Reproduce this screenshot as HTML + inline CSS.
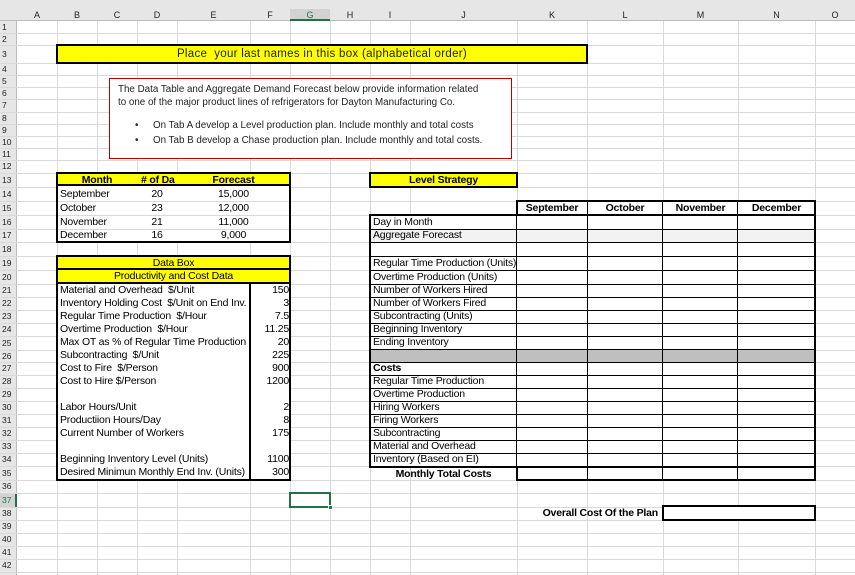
<!DOCTYPE html>
<html><head><meta charset="utf-8">
<style>
*{margin:0;padding:0;box-sizing:border-box}
body{width:855px;height:575px;overflow:hidden;background:#fff;position:relative;font-family:"Liberation Sans",sans-serif;color:#000}
.a{position:absolute}
.h{position:absolute;left:0;width:855px;height:1px;background:#d9d9d9}
.v{position:absolute;top:21px;width:1px;height:554px;background:#d9d9d9}
.ch{position:absolute;top:9px;height:12px;font-size:9px;line-height:12px;text-align:center;color:#222}
.rh{position:absolute;left:0;width:17px;font-size:8.5px;color:#222;padding-left:2px}
.t{position:absolute;font-size:10.5px;line-height:13px;white-space:nowrap;letter-spacing:-0.2px}
.b{font-weight:bold}
.y{background:#ffff00}
</style></head><body>
<div class="a" style="left:0;top:0;width:855px;height:21px;background:#e6e6e6;border-bottom:1px solid #bcbcbc"></div>
<div class="a" style="left:0;top:21px;width:17px;height:554px;background:#e6e6e6;border-right:1px solid #bcbcbc"></div>
<div class="a" style="left:290px;top:9px;width:40px;height:12px;background:#d2d2d2;border-bottom:2px solid #217346"></div>
<div class="a" style="left:0;top:493px;width:17px;height:14px;background:#d2d2d2;border-right:2px solid #217346"></div>

<div class="v" style="left:57px"></div><div class="v" style="left:97px"></div><div class="v" style="left:137px"></div><div class="v" style="left:177px"></div><div class="v" style="left:250px"></div><div class="v" style="left:290px"></div><div class="v" style="left:330px"></div><div class="v" style="left:370px"></div><div class="v" style="left:410px"></div><div class="v" style="left:517px"></div><div class="v" style="left:587px"></div><div class="v" style="left:663px"></div><div class="v" style="left:738px"></div><div class="v" style="left:815px"></div>
<div class="h" style="top:33px"></div><div class="h" style="top:45px"></div><div class="h" style="top:63px"></div><div class="h" style="top:75px"></div><div class="h" style="top:87px"></div><div class="h" style="top:99px"></div><div class="h" style="top:112px"></div><div class="h" style="top:124px"></div><div class="h" style="top:136px"></div><div class="h" style="top:148px"></div><div class="h" style="top:160px"></div><div class="h" style="top:173px"></div><div class="h" style="top:187px"></div><div class="h" style="top:201px"></div><div class="h" style="top:215px"></div><div class="h" style="top:229px"></div><div class="h" style="top:242px"></div><div class="h" style="top:256px"></div><div class="h" style="top:270px"></div><div class="h" style="top:284px"></div><div class="h" style="top:297px"></div><div class="h" style="top:310px"></div><div class="h" style="top:323px"></div><div class="h" style="top:336px"></div><div class="h" style="top:350px"></div><div class="h" style="top:362px"></div><div class="h" style="top:375px"></div><div class="h" style="top:388px"></div><div class="h" style="top:401px"></div><div class="h" style="top:414px"></div><div class="h" style="top:427px"></div><div class="h" style="top:440px"></div><div class="h" style="top:453px"></div><div class="h" style="top:466px"></div><div class="h" style="top:480px"></div><div class="h" style="top:493px"></div><div class="h" style="top:507px"></div><div class="h" style="top:520px"></div><div class="h" style="top:533px"></div><div class="h" style="top:546px"></div><div class="h" style="top:559px"></div><div class="h" style="top:572px"></div>

<div class="ch" style="left:17px;width:40px">A</div><div class="ch" style="left:57px;width:40px">B</div><div class="ch" style="left:97px;width:40px">C</div><div class="ch" style="left:137px;width:40px">D</div><div class="ch" style="left:177px;width:73px">E</div><div class="ch" style="left:250px;width:40px">F</div><div class="ch" style="left:290px;width:40px;color:#217346">G</div><div class="ch" style="left:330px;width:40px">H</div><div class="ch" style="left:370px;width:40px">I</div><div class="ch" style="left:410px;width:107px">J</div><div class="ch" style="left:517px;width:70px">K</div><div class="ch" style="left:587px;width:76px">L</div><div class="ch" style="left:663px;width:75px">M</div><div class="ch" style="left:738px;width:77px">N</div><div class="ch" style="left:815px;width:40px">O</div>

<div class="rh" style="top:21px;line-height:12px">1</div><div class="rh" style="top:33px;line-height:12px">2</div><div class="rh" style="top:45px;line-height:18px">3</div><div class="rh" style="top:63px;line-height:12px">4</div><div class="rh" style="top:75px;line-height:12px">5</div><div class="rh" style="top:87px;line-height:12px">6</div><div class="rh" style="top:99px;line-height:13px">7</div><div class="rh" style="top:112px;line-height:12px">8</div><div class="rh" style="top:124px;line-height:12px">9</div><div class="rh" style="top:136px;line-height:12px">10</div><div class="rh" style="top:148px;line-height:12px">11</div><div class="rh" style="top:160px;line-height:13px">12</div><div class="rh" style="top:173px;line-height:14px">13</div><div class="rh" style="top:187px;line-height:14px">14</div><div class="rh" style="top:201px;line-height:14px">15</div><div class="rh" style="top:215px;line-height:14px">16</div><div class="rh" style="top:229px;line-height:13px">17</div><div class="rh" style="top:242px;line-height:14px">18</div><div class="rh" style="top:256px;line-height:14px">19</div><div class="rh" style="top:270px;line-height:14px">20</div><div class="rh" style="top:284px;line-height:13px">21</div><div class="rh" style="top:297px;line-height:13px">22</div><div class="rh" style="top:310px;line-height:13px">23</div><div class="rh" style="top:323px;line-height:13px">24</div><div class="rh" style="top:336px;line-height:14px">25</div><div class="rh" style="top:350px;line-height:12px">26</div><div class="rh" style="top:362px;line-height:13px">27</div><div class="rh" style="top:375px;line-height:13px">28</div><div class="rh" style="top:388px;line-height:13px">29</div><div class="rh" style="top:401px;line-height:13px">30</div><div class="rh" style="top:414px;line-height:13px">31</div><div class="rh" style="top:427px;line-height:13px">32</div><div class="rh" style="top:440px;line-height:13px">33</div><div class="rh" style="top:453px;line-height:13px">34</div><div class="rh" style="top:466px;line-height:14px">35</div><div class="rh" style="top:480px;line-height:13px">36</div><div class="rh" style="top:493px;line-height:14px;color:#217346">37</div><div class="rh" style="top:507px;line-height:13px">38</div><div class="rh" style="top:520px;line-height:13px">39</div><div class="rh" style="top:533px;line-height:13px">40</div><div class="rh" style="top:546px;line-height:13px">41</div><div class="rh" style="top:559px;line-height:13px">42</div>

<div class="a y" style="left:56px;top:44px;width:532px;height:20px;border:2px solid #000;font-size:11.5px;line-height:16px;text-align:center;color:#222;letter-spacing:0.3px">Place&nbsp; your last names in this box (alphabetical order)</div>

<div class="a" style="left:109px;top:78px;width:403px;height:81px;border:1px solid #c00000;background:#fff;font-size:9.8px;color:#222">
 <div class="a" style="left:8px;top:4px;line-height:13px;white-space:nowrap">The Data Table and Aggregate Demand Forecast below provide information related<br>to one of the major product lines of refrigerators for Dayton Manufacturing Co.</div>
 <div class="a" style="left:25px;top:39px;line-height:15px;white-space:nowrap">•</div>
 <div class="a" style="left:25px;top:54px;line-height:15px;white-space:nowrap">•</div>
 <div class="a" style="left:43px;top:39px;line-height:15px;white-space:nowrap">On Tab A develop a Level production plan. Include monthly and total costs<br>On Tab B develop a Chase production plan. Include monthly and total costs.</div>
</div>

<div class="a" style="left:56px;top:172px;width:235px;height:71px;border:2px solid #000;background:#fff"></div>
<div class="a y" style="left:58px;top:174px;width:231px;height:12px;border-bottom:2px solid #000"></div>
<div class="a" style="left:58px;top:201px;width:231px;height:1px;background:#d9d9d9"></div>
<div class="a" style="left:58px;top:215px;width:231px;height:1px;background:#d9d9d9"></div>
<div class="a" style="left:58px;top:229px;width:231px;height:1px;background:#d9d9d9"></div>
<div class="t b" style="left:57px;top:174px;width:80px;text-align:center">Month</div>
<div class="t b" style="left:137px;top:174px;width:40px;overflow:hidden;text-align:left;padding-left:4px">#&nbsp;of Da</div>
<div class="t b" style="left:177px;top:174px;width:113px;text-align:center">Forecast</div>
<div class="t" style="left:60px;top:188px">September</div><div class="t" style="left:137px;top:188px;width:40px;text-align:center">20</div><div class="t" style="left:177px;top:188px;width:113px;text-align:center">15,000</div>
<div class="t" style="left:60px;top:202px">October</div><div class="t" style="left:137px;top:202px;width:40px;text-align:center">23</div><div class="t" style="left:177px;top:202px;width:113px;text-align:center">12,000</div>
<div class="t" style="left:60px;top:216px">November</div><div class="t" style="left:137px;top:216px;width:40px;text-align:center">21</div><div class="t" style="left:177px;top:216px;width:113px;text-align:center">11,000</div>
<div class="t" style="left:60px;top:229px">December</div><div class="t" style="left:137px;top:229px;width:40px;text-align:center">16</div><div class="t" style="left:177px;top:229px;width:113px;text-align:center">9,000</div>

<div class="a" style="left:56px;top:255px;width:235px;height:226px;border:2px solid #000;background:#fff"></div>
<div class="a y" style="left:58px;top:257px;width:231px;height:13px;border-bottom:2px solid #000"></div>
<div class="a y" style="left:58px;top:270px;width:231px;height:14px;border-bottom:2px solid #000"></div>
<div class="a" style="left:249px;top:284px;width:2px;height:196px;background:#000"></div>
<div class="t" style="left:57px;top:257px;width:233px;text-align:center">Data Box</div>
<div class="t" style="left:57px;top:270px;width:233px;text-align:center">Productivity and Cost Data</div>
<div class="t" style="left:60px;top:284px">Material and Overhead&nbsp; $/Unit</div><div class="t" style="left:251px;top:284px;width:38px;text-align:right">150</div>
<div class="t" style="left:60px;top:297px">Inventory Holding Cost&nbsp; $/Unit on End Inv.</div><div class="t" style="left:251px;top:297px;width:38px;text-align:right">3</div>
<div class="t" style="left:60px;top:310px">Regular Time Production&nbsp; $/Hour</div><div class="t" style="left:251px;top:310px;width:38px;text-align:right">7.5</div>
<div class="t" style="left:60px;top:323px">Overtime Production&nbsp; $/Hour</div><div class="t" style="left:251px;top:323px;width:38px;text-align:right">11.25</div>
<div class="t" style="left:60px;top:336px">Max OT as % of Regular Time Production</div><div class="t" style="left:251px;top:336px;width:38px;text-align:right">20</div>
<div class="t" style="left:60px;top:349px">Subcontracting&nbsp; $/Unit</div><div class="t" style="left:251px;top:349px;width:38px;text-align:right">225</div>
<div class="t" style="left:60px;top:362px">Cost to Fire&nbsp; $/Person</div><div class="t" style="left:251px;top:362px;width:38px;text-align:right">900</div>
<div class="t" style="left:60px;top:375px">Cost to Hire $/Person</div><div class="t" style="left:251px;top:375px;width:38px;text-align:right">1200</div>
<div class="t" style="left:60px;top:401px">Labor Hours/Unit</div><div class="t" style="left:251px;top:401px;width:38px;text-align:right">2</div>
<div class="t" style="left:60px;top:414px">Productiion Hours/Day</div><div class="t" style="left:251px;top:414px;width:38px;text-align:right">8</div>
<div class="t" style="left:60px;top:427px">Current Number of Workers</div><div class="t" style="left:251px;top:427px;width:38px;text-align:right">175</div>
<div class="t" style="left:60px;top:453px">Beginning Inventory Level (Units)</div><div class="t" style="left:251px;top:453px;width:38px;text-align:right">1100</div>
<div class="t" style="left:60px;top:466px">Desired Minimun Monthly End Inv. (Units)</div><div class="t" style="left:251px;top:466px;width:38px;text-align:right">300</div>

<div class="a" style="left:289px;top:492px;width:42px;height:16px;border:2px solid #217346"></div>
<div class="a" style="left:328px;top:505px;width:5px;height:5px;background:#217346;border:1px solid #fff"></div>

<div class="a y" style="left:369px;top:172px;width:149px;height:16px;border:2px solid #000"></div>
<div class="t b" style="left:369px;top:174px;width:149px;text-align:center">Level Strategy</div>

<div class="a" style="left:370px;top:215px;width:445px;height:252px;background:#fff"></div>
<div class="a" style="left:370px;top:229px;width:445px;height:13px;background:#f2f2f2"></div>
<div class="a" style="left:370px;top:350px;width:445px;height:12px;background:#bfbfbf"></div>
<div class="a" style="left:516px;top:200px;width:300px;height:16px;border:2px solid #000;background:#fff"></div>
<div class="a" style="left:369px;top:214px;width:447px;height:254px;border:2px solid #000"></div>
<div class="a" style="left:516px;top:214px;width:1px;height:254px;background:#000"></div>
<div class="a" style="left:587px;top:201px;width:1px;height:280px;background:#000"></div>
<div class="a" style="left:662px;top:201px;width:1px;height:280px;background:#000"></div>
<div class="a" style="left:737px;top:201px;width:1px;height:280px;background:#000"></div>
<div class="a" style="left:370px;top:229px;width:445px;height:1px;background:#000"></div>
<div class="a" style="left:370px;top:242px;width:445px;height:1px;background:#000"></div>
<div class="a" style="left:370px;top:256px;width:445px;height:1px;background:#000"></div>
<div class="a" style="left:370px;top:270px;width:445px;height:1px;background:#000"></div>
<div class="a" style="left:370px;top:284px;width:445px;height:1px;background:#000"></div>
<div class="a" style="left:370px;top:297px;width:445px;height:1px;background:#000"></div>
<div class="a" style="left:370px;top:310px;width:445px;height:1px;background:#000"></div>
<div class="a" style="left:370px;top:323px;width:445px;height:1px;background:#000"></div>
<div class="a" style="left:370px;top:336px;width:445px;height:1px;background:#000"></div>
<div class="a" style="left:370px;top:349px;width:445px;height:1px;background:#000"></div>
<div class="a" style="left:370px;top:362px;width:445px;height:1px;background:#000"></div>
<div class="a" style="left:370px;top:375px;width:445px;height:1px;background:#000"></div>
<div class="a" style="left:370px;top:388px;width:445px;height:1px;background:#000"></div>
<div class="a" style="left:370px;top:401px;width:445px;height:1px;background:#000"></div>
<div class="a" style="left:370px;top:414px;width:445px;height:1px;background:#000"></div>
<div class="a" style="left:370px;top:427px;width:445px;height:1px;background:#000"></div>
<div class="a" style="left:370px;top:440px;width:445px;height:1px;background:#000"></div>
<div class="a" style="left:370px;top:453px;width:445px;height:1px;background:#000"></div>
<div class="a" style="left:516px;top:466px;width:300px;height:15px;border:2px solid #000;background:#fff"></div>
<div class="a" style="left:587px;top:468px;width:1px;height:12px;background:#000"></div>
<div class="a" style="left:662px;top:468px;width:1px;height:12px;background:#000"></div>
<div class="a" style="left:737px;top:468px;width:1px;height:12px;background:#000"></div>
<div class="a" style="left:369px;top:466px;width:148px;height:2px;background:#000"></div>

<div class="t b" style="left:517px;top:202px;width:70px;text-align:center">September</div>
<div class="t b" style="left:587px;top:202px;width:76px;text-align:center">October</div>
<div class="t b" style="left:663px;top:202px;width:75px;text-align:center">November</div>
<div class="t b" style="left:738px;top:202px;width:77px;text-align:center">December</div>

<div class="t" style="left:373px;top:216px">Day in Month</div>
<div class="t" style="left:373px;top:229px">Aggregate Forecast</div>
<div class="t" style="left:373px;top:257px;width:143px;overflow:hidden">Regular Time Production (Units)</div>
<div class="t" style="left:373px;top:271px">Overtime Production (Units)</div>
<div class="t" style="left:373px;top:284px">Number of Workers Hired</div>
<div class="t" style="left:373px;top:297px">Number of Workers Fired</div>
<div class="t" style="left:373px;top:310px">Subcontracting (Units)</div>
<div class="t" style="left:373px;top:323px">Beginning Inventory</div>
<div class="t" style="left:373px;top:336px">Ending Inventory</div>
<div class="t b" style="left:373px;top:362px">Costs</div>
<div class="t" style="left:373px;top:375px">Regular Time Production</div>
<div class="t" style="left:373px;top:388px">Overtime Production</div>
<div class="t" style="left:373px;top:401px">Hiring Workers</div>
<div class="t" style="left:373px;top:414px">Firing Workers</div>
<div class="t" style="left:373px;top:427px">Subcontracting</div>
<div class="t" style="left:373px;top:440px">Material and Overhead</div>
<div class="t" style="left:373px;top:453px">Inventory (Based on EI)</div>
<div class="t b" style="left:370px;top:468px;width:147px;text-align:center">Monthly Total Costs</div>

<div class="t b" style="left:480px;top:507px;width:178px;text-align:right">Overall Cost Of the Plan</div>
<div class="a" style="left:662px;top:505px;width:154px;height:16px;border:2px solid #000;background:#fff"></div>
</body></html>
